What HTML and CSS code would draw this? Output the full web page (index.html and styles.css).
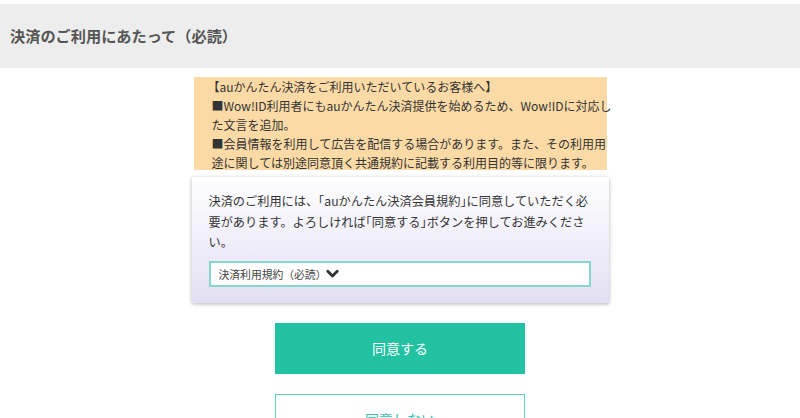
FILE: index.html
```html
<!DOCTYPE html>
<html lang="ja">
<head>
<meta charset="utf-8">
<link rel="stylesheet" href="styles.css">
</head>
<body>
<header class="page-header">
  <h1 class="page-title">決済のご利用にあたって（必読）</h1>
</header>
<main class="content">
  <div class="notice">
    <span class="notice-line notice-head">【auかんたん決済をご利用いただいているお客様へ】</span>
    <span class="notice-line">■Wow!ID利用者にもauかんたん決済提供を始めるため、Wow!IDに対応し</span>
    <span class="notice-line">た文言を追加。</span>
    <span class="notice-line">■会員情報を利用して広告を配信する場合があります。また、その利用用</span>
    <span class="notice-line">途に関しては別途同意頂く共通規約に記載する利用目的等に限ります。</span>
  </div>
  <section class="card">
    <p class="card-text">決済のご利用には、<span class="nb">「</span>auかんたん決済会員規約<span class="nb">」</span>に同意していただく必<br>要があります。よろしければ<span class="nb">「</span>同意する<span class="nb">」</span>ボタンを押してお進みくださ<br>い。</p>
    <div class="select">
      <span class="select-label">決済利用規約（必読）</span>
      <svg class="chevron" width="13" height="10" viewBox="0 0 13 10"><polyline points="1.8,2.2 6.5,7 11.2,2.2" fill="none" stroke="#333" stroke-width="2.8" stroke-linecap="round" stroke-linejoin="round"/></svg>
    </div>
  </section>
  <button class="btn btn-primary">同意する</button>
  <button class="btn btn-secondary">同意しない</button>
</main>
</body>
</html>
```
FILE: styles.css
```css
html, body {
  margin: 0;
  padding: 0;
  background: #fff;
  overflow: hidden;
}
body {
  font-family: "Noto Sans CJK JP", "Noto Sans", sans-serif;
  color: #333;
}
.page-header {
  margin-top: 4px;
  height: 64px;
  background: #ededed;
  display: flex;
  align-items: center;
  padding-left: 10px;
}
.page-title {
  margin: 0;
  font-size: 15.2px;
  font-weight: 700;
  color: #555;
  line-height: 20px;
  margin-top: -2px;
}
.content {
  display: flex;
  flex-direction: column;
  align-items: center;
}
.notice {
  margin-top: 9px;
  width: 413px;
  box-sizing: border-box;
  padding: 0 0 0 18px;
  background: #fcdaa6;
  font-size: 12px;
  line-height: 19px;
  height: 93px;
  color: #333;
}
.notice-line {
  display: block;
  white-space: nowrap;
}
.notice-head {
  margin-left: -4px;
}
.card {
  margin-top: 7px;
  width: 417px;
  box-sizing: border-box;
  padding: 14px 18px 16px 17px;
  background: linear-gradient(to bottom, #fefeff 0%, #e3dff3 100%);
  box-shadow: 0 1px 4px rgba(0, 0, 0, 0.3);
}
.card-text {
  margin: 0;
  font-size: 12.2px;
  line-height: 20.5px;
  color: #333;
  white-space: nowrap;
}
.nb {
  font-feature-settings: "halt";
}
.select {
  margin-top: 8px;
  height: 26px;
  box-sizing: border-box;
  border: 2px solid #86d7cc;
  background: #fff;
  display: flex;
  align-items: center;
  padding-left: 8px;
  gap: 0;
}
.select-label {
  font-size: 10.8px;
  color: #444;
}
.chevron {
  display: block;
}
.btn {
  width: 250px;
  height: 51px;
  box-sizing: border-box;
  font-family: inherit;
  font-size: 14px;
  border-radius: 0;
  padding: 0;
}
.btn-primary {
  margin-top: 20px;
  background: #21c1a2;
  color: #fff;
  border: none;
}
.btn-secondary {
  margin-top: 20px;
  background: #fff;
  color: #3cbfae;
  border: 1px solid #66cfc1;
}
```
